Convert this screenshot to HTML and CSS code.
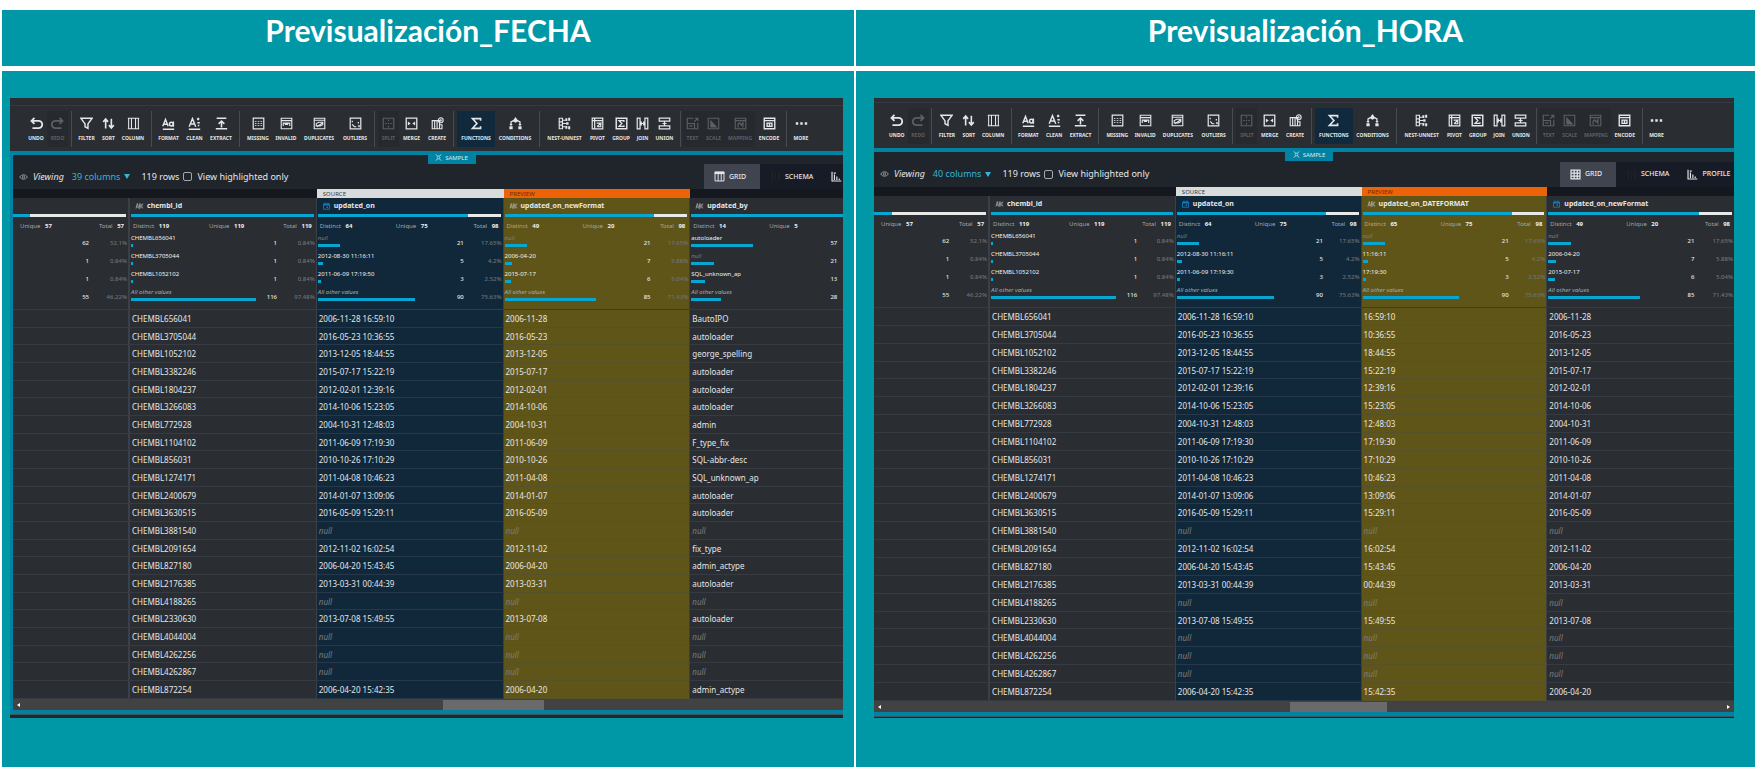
FILE: index.html
```
<!DOCTYPE html>
<html lang="es">
<head>
<meta charset="utf-8">
<title>Previsualización</title>
<link rel="stylesheet" href="styles.css">
</head>
<body>
<svg class="sprite" aria-hidden="true">
  <symbol id="undo" viewBox="0 0 16 16"><path d="M5.500 1 1.800 4.800l3.700 3.700M2 4.800h8.500a4.400 4.400 0 0 1 0 9H3" fill="none" stroke="currentColor" stroke-width="2.200"/></symbol>
  <symbol id="redo" viewBox="0 0 16 16"><path d="M10.500 1 14.200 4.800l-3.700 3.700M14 4.800H5.500a4.400 4.400 0 0 0 0 9H13" fill="none" stroke="currentColor" stroke-width="2.200"/></symbol>
  <symbol id="filter" viewBox="0 0 16 16"><path d="M1 1.500h14L9.800 8.500V14L6.200 12V8.500z" fill="none" stroke="currentColor" stroke-width="1.800"/></symbol>
  <symbol id="sort" viewBox="0 0 16 16"><path d="M4.500 14V3M1.500 6 4.500 2.500 7.500 6M11.500 2v11M8.500 10l3 3.500 3-3.500" fill="none" stroke="currentColor" stroke-width="2"/></symbol>
  <symbol id="column" viewBox="0 0 16 16"><path d="M2 1.500v13M5.500 1.500v13M10.500 1.500v13M14 1.500v13M1 1.500h14M1 14.500h14" fill="none" stroke="currentColor" stroke-width="1.300"/></symbol>
  <symbol id="format" viewBox="0 0 16 16"><path d="M1 15h14M1 11.500 4.300 3l3.300 8.500M2.200 9h4.400" fill="none" stroke="currentColor" stroke-width="1.800"/><circle cx="11.500" cy="8.700" r="2.300" fill="none" stroke="currentColor" stroke-width="1.800"/><path d="M14 5.500v6.500" stroke="currentColor" stroke-width="1.800"/></symbol>
  <symbol id="clean" viewBox="0 0 16 16"><path d="M1 15h14M1.500 12 5.500 2l4 10M3 8.500h5M11 2.500h3M12.500 1v3M11.500 7h3M13 9.500v2" fill="none" stroke="currentColor" stroke-width="1.800"/></symbol>
  <symbol id="extract" viewBox="0 0 16 16"><path d="M2 1.500h12M1 14.500h14M8 13V5M4.500 8.500 8 5l3.500 3.500" fill="none" stroke="currentColor" stroke-width="1.900"/></symbol>
  <symbol id="missing" viewBox="0 0 16 16"><path d="M1.500 1.500h13v13h-13z" fill="none" stroke="currentColor" stroke-width="1.500"/><path d="M3.500 5.500h9M3.500 8h9M3.500 10.500h9" stroke="currentColor" stroke-width="1" stroke-dasharray="2 1.500"/></symbol>
  <symbol id="invalid" viewBox="0 0 16 16"><path d="M1.500 1.500h13v13h-13zM1.500 4.500h13M4 11V7.500h8V11M6 9h4" fill="none" stroke="currentColor" stroke-width="1.400"/></symbol>
  <symbol id="duplicates" viewBox="0 0 16 16"><path d="M1.500 1.500h13v13h-13zM1.500 4h13M4 11V8l3-1.500h5v3L9 11zM5 12l7-5" fill="none" stroke="currentColor" stroke-width="1.400"/></symbol>
  <symbol id="outliers" viewBox="0 0 16 16"><path d="M1.500 1.500h13v13h-13z" fill="none" stroke="currentColor" stroke-width="1.500"/><path d="M4 4.500v2M4 9l2.500 3H9M11.500 6v2M11 11h1.500v1.500" fill="none" stroke="currentColor" stroke-width="1.500"/></symbol>
  <symbol id="split" viewBox="0 0 16 16"><path d="M1.500 1.500h13v13h-13zM8 3v2M8 7v2M8 11v2M4 8h2M10 8h2" fill="none" stroke="currentColor" stroke-width="1.400"/></symbol>
  <symbol id="merge" viewBox="0 0 16 16"><path d="M1.500 1.500h13v13h-13z" fill="none" stroke="currentColor" stroke-width="1.600"/><path d="M3.500 5.500 7 8l-3.500 2.500zM12.500 5.500 9 8l3.500 2.500z" fill="currentColor"/></symbol>
  <symbol id="create" viewBox="0 0 16 16"><path d="M1.500 4.500h9v10h-9zM4.500 4.500v10M7.500 4.500v10M10.500 9.500h3v5h-3" fill="none" stroke="currentColor" stroke-width="1.400"/><circle cx="12" cy="4" r="3" fill="none" stroke="currentColor" stroke-width="1.300"/><path d="M12 2v4M10 4h4" stroke="currentColor"/></symbol>
  <symbol id="functions" viewBox="0 0 16 16"><path d="M13 4.500V2H3l5.500 6L3 14h10v-2.500" fill="none" stroke="currentColor" stroke-width="2"/></symbol>
  <symbol id="conditions" viewBox="0 0 16 16"><path d="M4.500 5 8 0l3.500 5L8 7z" fill="currentColor"/><path d="M5.500 4.500 2.500 6v4M10.500 4.500l3 1.500v4" fill="none" stroke="currentColor" stroke-width="1.600"/><path d="M.500 8.500h4L2.500 11zM11.500 8.500h4l-2 2.500zM.500 11.500h4V15h-4zM11.500 11.500h4V15h-4z" fill="currentColor"/></symbol>
  <symbol id="nest" viewBox="0 0 16 16"><path d="M1.500 1.500h4v13h-4zM1.500 6h4M1.500 10h4M6 4h3M6 8h4M6 12h3" fill="none" stroke="currentColor" stroke-width="1.400"/><path d="M9 1.500h2.500V5H9zM12.500 1h2.500v3.500h-2.500zM10 6.500h3v3h-3zM9 11h2.500v3.500H9zM12.500 11.500H15V15h-2.500z" fill="currentColor"/></symbol>
  <symbol id="pivot" viewBox="0 0 16 16"><path d="M1.500 1.500h13v13h-13zM1.500 4.500h13M4.500 1.500v13M7 7.500h5L7.500 12M12 8v4H8" fill="none" stroke="currentColor" stroke-width="1.500"/></symbol>
  <symbol id="group" viewBox="0 0 16 16"><path d="M1.500 1.500h13v13h-13z" fill="none" stroke="currentColor" stroke-width="1.800"/><path d="M11 6V4.500H5L8.500 8 5 11.500h6V10" fill="none" stroke="currentColor" stroke-width="1.600"/></symbol>
  <symbol id="join" viewBox="0 0 16 16"><path d="M1.500 1.500H5v13H1.500zM11 1.500h3.500v13H11zM5 8h6M9.500 5.500v5M6.500 5.500v5" fill="none" stroke="currentColor" stroke-width="1.500"/></symbol>
  <symbol id="union" viewBox="0 0 16 16"><path d="M1.500 1.500h13V5h-13zM1.500 11h13v3.500h-13zM8 5v6M5.500 8h5" fill="none" stroke="currentColor" stroke-width="1.500"/></symbol>
  <symbol id="text" viewBox="0 0 16 16"><path d="M9 1.500H1.500v13h13V7M1.500 8h9v6.500M4 11h4M10 6l4.500-4.500M11 1.500h3.500V5" fill="none" stroke="currentColor" stroke-width="1.400"/></symbol>
  <symbol id="scale" viewBox="0 0 16 16"><path d="M1.500 1.500h13v13h-13z" fill="none" stroke="currentColor" stroke-width="1.300"/><path d="M4 3.500V13h9z" fill="currentColor"/></symbol>
  <symbol id="mapping" viewBox="0 0 16 16"><path d="M1.500 1.500h13v13h-13zM1.500 4.500h13M5 13V9l2-2 2 3 2-3v6" fill="none" stroke="currentColor" stroke-width="1.400"/></symbol>
  <symbol id="encode" viewBox="0 0 16 16"><path d="M1.500 1.500h13v13h-13zM1.500 4.500h13M5 7.500h6v4H5zM8 7.500v4" fill="none" stroke="currentColor" stroke-width="1.700"/></symbol>
  <symbol id="more" viewBox="0 0 16 16"><path d="M1 6.500h3v3H1zM6.500 6.500h3v3h-3zM12 6.500h3v3h-3z" fill="currentColor"/></symbol>
  <symbol id="eye" viewBox="0 0 16 16"><path d="M1 8q7-8 14 0-7 8-14 0z" fill="none" stroke="currentColor" stroke-width="1.500"/><circle cx="8" cy="8" r="2" fill="none" stroke="currentColor" stroke-width="1.300"/></symbol>
  <symbol id="sample" viewBox="0 0 16 16"><path d="M2 1l4 4M14 1l-4 4M2 15l4-4M14 15l-4-4" fill="none" stroke="currentColor" stroke-width="2"/><circle cx="8" cy="8" r="3" fill="none" stroke="currentColor" stroke-width="1.600"/></symbol>
  <symbol id="grid-a" viewBox="0 0 16 16"><path d="M1.500 1.500h13v13h-13zM6 4v10.500M10.500 4v10.500" fill="none" stroke="currentColor" stroke-width="1.400"/><path d="M1 1h14v3.500H1z" fill="currentColor"/></symbol>
  <symbol id="grid-b" viewBox="0 0 16 16"><path d="M1.500 1.500h13v13h-13zM6 1.500v13M10.500 1.500v13M1.500 6h13M1.500 10.500h13" fill="none" stroke="currentColor" stroke-width="1.800"/></symbol>
  <symbol id="schema" viewBox="0 0 16 16"><path d="M2 1h12v14H2z" fill="#1f2124"/><path d="M6 1v14M10 1v14" stroke="#10131a"/></symbol>
  <symbol id="profile" viewBox="0 0 16 16"><path d="M1.500 1v13.500H15M5 13V5M8.500 13V8M12 13v-2M4 3h3" fill="none" stroke="currentColor" stroke-width="1.700"/></symbol>
  <symbol id="abc" viewBox="0 0 16 16"><path d="M1 13 3.500 3 6 13M2 10h3M7.500 3.500v9h1.500a2 2 0 0 0 0-4.500H7.500h1.500a2 2 0 0 0 0-4.500zM15.500 4.500q-3-2-3 3.500t3 4" fill="none" stroke="currentColor" stroke-width="1.300"/></symbol>
  <symbol id="date" viewBox="0 0 16 16"><path d="M2 4h12v10.500H2z" fill="none" stroke="currentColor" stroke-width="1.800"/><path d="M2 4h12v3H2zM4 1h2v3H4zM10 1h2v3h-2zM8 9h3v3H8z" fill="currentColor"/></symbol>
</svg>

<main class="page">
  <h2 class="title">Previsualización_FECHA</h2>
  <h2 class="title">Previsualización_HORA</h2>

  <section class="cell cell-left">
    <div class="panel panel-left">
      <div class="topline"></div>
      <div class="toolbar">
        <span></span>
        <button class="tool"><svg><use href="#undo"/></svg>UNDO</button>
        <button class="tool" disabled><svg><use href="#redo"/></svg>REDO</button>
        <span class="sep"></span>
        <button class="tool"><svg><use href="#filter"/></svg>FILTER</button>
        <button class="tool"><svg><use href="#sort"/></svg>SORT</button>
        <button class="tool"><svg><use href="#column"/></svg>COLUMN</button>
        <span class="sep"></span>
        <button class="tool"><svg><use href="#format"/></svg>FORMAT</button>
        <button class="tool"><svg><use href="#clean"/></svg>CLEAN</button>
        <button class="tool"><svg><use href="#extract"/></svg>EXTRACT</button>
        <span class="sep"></span>
        <button class="tool"><svg><use href="#missing"/></svg>MISSING</button>
        <button class="tool"><svg><use href="#invalid"/></svg>INVALID</button>
        <button class="tool"><svg><use href="#duplicates"/></svg>DUPLICATES</button>
        <button class="tool"><svg><use href="#outliers"/></svg>OUTLIERS</button>
        <span class="sep"></span>
        <button class="tool" disabled><svg><use href="#split"/></svg>SPLIT</button>
        <button class="tool"><svg><use href="#merge"/></svg>MERGE</button>
        <button class="tool"><svg><use href="#create"/></svg>CREATE</button>
        <span class="sep"></span>
        <button class="tool active"><svg><use href="#functions"/></svg>FUNCTIONS</button>
        <button class="tool"><svg><use href="#conditions"/></svg>CONDITIONS</button>
        <span class="sep"></span>
        <button class="tool"><svg><use href="#nest"/></svg>NEST-UNNEST</button>
        <button class="tool"><svg><use href="#pivot"/></svg>PIVOT</button>
        <button class="tool"><svg><use href="#group"/></svg>GROUP</button>
        <button class="tool"><svg><use href="#join"/></svg>JOIN</button>
        <button class="tool"><svg><use href="#union"/></svg>UNION</button>
        <span class="sep"></span>
        <button class="tool" disabled><svg><use href="#text"/></svg>TEXT</button>
        <button class="tool" disabled><svg><use href="#scale"/></svg>SCALE</button>
        <button class="tool" disabled><svg><use href="#mapping"/></svg>MAPPING</button>
        <button class="tool"><svg><use href="#encode"/></svg>ENCODE</button>
        <span class="sep"></span>
        <button class="tool"><svg><use href="#more"/></svg>MORE</button>
      </div>
      <div class="strip strip-top"><span class="sample"><svg><use href="#sample"/></svg>SAMPLE</span></div>
      <div class="body">
        <div class="viewbar">
          <svg class="eye"><use href="#eye"/></svg><em class="viewing">Viewing</em>
          <button class="columns">39 columns <span class="caret"></span></button>
          <span class="rows">119 rows</span>
          <label class="check"><input type="checkbox">View highlighted only</label>
          <div class="tabs">
            <button class="tab on"><svg><use href="#grid-a"/></svg>GRID</button>
            <button class="tab"><svg><use href="#schema"/></svg>SCHEMA</button>
            <button class="tab" aria-label="Profile"><svg><use href="#profile"/></svg></button>
          </div>
        </div>
        <div class="wrap">
          <table class="data">
            <colgroup><col class="c-first"><col class="c-mid"><col class="c-mid"><col class="c-mid"><col></colgroup>
            <thead>
              <tr class="band"><td></td><td></td><td>SOURCE</td><td>PREVIEW</td><td></td></tr>
              <tr class="names">
                <th><div class="name"></div><div class="fill"><b style="width:15%"></b></div></th>
                <th><div class="name"><svg><use href="#abc"/></svg>chembl_id</div><div class="fill"><b style="width:100%"></b></div></th>
                <th><div class="name"><svg class="date"><use href="#date"/></svg>updated_on</div><div class="fill"><b style="width:82%"></b></div></th>
                <th><div class="name"><svg><use href="#abc"/></svg>updated_on_newFormat</div><div class="fill"><b style="width:82%"></b></div></th>
                <th><div class="name"><svg><use href="#abc"/></svg>updated_by</div><div class="fill fill-cut"><b style="width:100%"></b></div></th>
              </tr>
              <tr class="profile">
                <td><div class="tail">
                  <div class="stats"><span>Unique <b>57</b></span><span>Total <b>57</b></span></div>
                  <div class="val"><b>62</b><span>52.1%</span></div>
                  <div class="val"><b>1</b><span>0.84%</span></div>
                  <div class="val"><b>1</b><span>0.84%</span></div>
                  <div class="val"><b>55</b><span>46.22%</span></div>
                </div></td>
                <td><div class="prof">
                  <div class="stats"><span>Distinct <b>119</b></span><span>Unique <b>119</b></span><span>Total <b>119</b></span></div>
                  <div class="val"><div>CHEMBL656041<i style="width:1%"></i></div><b>1</b><span>0.84%</span></div>
                  <div class="val"><div>CHEMBL3705044<i style="width:1%"></i></div><b>1</b><span>0.84%</span></div>
                  <div class="val"><div>CHEMBL1052102<i style="width:1%"></i></div><b>1</b><span>0.84%</span></div>
                  <div class="val"><div><em>All other values</em><i style="width:97.48%"></i></div><b>116</b><span>97.48%</span></div>
                </div></td>
                <td><div class="prof">
                  <div class="stats"><span>Distinct <b>64</b></span><span>Unique <b>75</b></span><span>Total <b>98</b></span></div>
                  <div class="val"><div><em class="null">null</em><i style="width:17.65%"></i></div><b>21</b><span>17.65%</span></div>
                  <div class="val"><div>2012-08-30 11:16:11<i style="width:4.2%"></i></div><b>5</b><span>4.2%</span></div>
                  <div class="val"><div>2011-06-09 17:19:50<i style="width:2.52%"></i></div><b>3</b><span>2.52%</span></div>
                  <div class="val"><div><em>All other values</em><i style="width:75.63%"></i></div><b>90</b><span>75.63%</span></div>
                </div></td>
                <td><div class="prof">
                  <div class="stats"><span>Distinct <b>49</b></span><span>Unique <b>20</b></span><span>Total <b>98</b></span></div>
                  <div class="val"><div><em class="null">null</em><i style="width:17.65%"></i></div><b>21</b><span>17.65%</span></div>
                  <div class="val"><div>2006-04-20<i style="width:5.88%"></i></div><b>7</b><span>5.88%</span></div>
                  <div class="val"><div>2015-07-17<i style="width:5.04%"></i></div><b>6</b><span>5.04%</span></div>
                  <div class="val"><div><em>All other values</em><i style="width:71.43%"></i></div><b>85</b><span>71.43%</span></div>
                </div></td>
                <td><div class="prof">
                  <div class="stats"><span>Distinct <b>14</b></span><span>Unique <b>5</b></span></div>
                  <div class="val"><div>autoloader<i style="width:47.9%"></i></div><b>57</b></div>
                  <div class="val"><div><em class="null">null</em><i style="width:17.65%"></i></div><b>21</b></div>
                  <div class="val"><div>SQL_unknown_ap<i style="width:10.92%"></i></div><b>13</b></div>
                  <div class="val"><div><em>All other values</em><i style="width:23.53%"></i></div><b>28</b></div>
                </div></td>
              </tr>
            </thead>
            <tbody>
              <tr><td></td><td>CHEMBL656041</td><td>2006-11-28 16:59:10</td><td>2006-11-28</td><td>BautoIPO</td></tr>
              <tr><td></td><td>CHEMBL3705044</td><td>2016-05-23 10:36:55</td><td>2016-05-23</td><td>autoloader</td></tr>
              <tr><td></td><td>CHEMBL1052102</td><td>2013-12-05 18:44:55</td><td>2013-12-05</td><td>george_spelling</td></tr>
              <tr><td></td><td>CHEMBL3382246</td><td>2015-07-17 15:22:19</td><td>2015-07-17</td><td>autoloader</td></tr>
              <tr><td></td><td>CHEMBL1804237</td><td>2012-02-01 12:39:16</td><td>2012-02-01</td><td>autoloader</td></tr>
              <tr><td></td><td>CHEMBL3266083</td><td>2014-10-06 15:23:05</td><td>2014-10-06</td><td>autoloader</td></tr>
              <tr><td></td><td>CHEMBL772928</td><td>2004-10-31 12:48:03</td><td>2004-10-31</td><td>admin</td></tr>
              <tr><td></td><td>CHEMBL1104102</td><td>2011-06-09 17:19:30</td><td>2011-06-09</td><td>F_type_fix</td></tr>
              <tr><td></td><td>CHEMBL856031</td><td>2010-10-26 17:10:29</td><td>2010-10-26</td><td>SQL-abbr-desc</td></tr>
              <tr><td></td><td>CHEMBL1274171</td><td>2011-04-08 10:46:23</td><td>2011-04-08</td><td>SQL_unknown_ap</td></tr>
              <tr><td></td><td>CHEMBL2400679</td><td>2014-01-07 13:09:06</td><td>2014-01-07</td><td>autoloader</td></tr>
              <tr><td></td><td>CHEMBL3630515</td><td>2016-05-09 15:29:11</td><td>2016-05-09</td><td>autoloader</td></tr>
              <tr><td></td><td>CHEMBL3881540</td><td><i>null</i></td><td><i>null</i></td><td><i>null</i></td></tr>
              <tr><td></td><td>CHEMBL2091654</td><td>2012-11-02 16:02:54</td><td>2012-11-02</td><td>fix_type</td></tr>
              <tr><td></td><td>CHEMBL827180</td><td>2006-04-20 15:43:45</td><td>2006-04-20</td><td>admin_actype</td></tr>
              <tr><td></td><td>CHEMBL2176385</td><td>2013-03-31 00:44:39</td><td>2013-03-31</td><td>autoloader</td></tr>
              <tr><td></td><td>CHEMBL4188265</td><td><i>null</i></td><td><i>null</i></td><td><i>null</i></td></tr>
              <tr><td></td><td>CHEMBL2330630</td><td>2013-07-08 15:49:55</td><td>2013-07-08</td><td>autoloader</td></tr>
              <tr><td></td><td>CHEMBL4044004</td><td><i>null</i></td><td><i>null</i></td><td><i>null</i></td></tr>
              <tr><td></td><td>CHEMBL4262256</td><td><i>null</i></td><td><i>null</i></td><td><i>null</i></td></tr>
              <tr><td></td><td>CHEMBL4262867</td><td><i>null</i></td><td><i>null</i></td><td><i>null</i></td></tr>
              <tr><td></td><td>CHEMBL872254</td><td>2006-04-20 15:42:35</td><td>2006-04-20</td><td>admin_actype</td></tr>
            </tbody>
          </table>
        </div>
        <div class="scroll"><span class="arrow-left"></span><span class="thumb"></span></div>
      </div>
      <div class="strip"></div>
      <div class="foot"></div>
    </div>
  </section>

  <section class="cell cell-right">
    <div class="panel panel-right">
      <div class="topline"></div>
      <div class="toolbar">
        <span></span>
        <button class="tool"><svg><use href="#undo"/></svg>UNDO</button>
        <button class="tool" disabled><svg><use href="#redo"/></svg>REDO</button>
        <span class="sep"></span>
        <button class="tool"><svg><use href="#filter"/></svg>FILTER</button>
        <button class="tool"><svg><use href="#sort"/></svg>SORT</button>
        <button class="tool"><svg><use href="#column"/></svg>COLUMN</button>
        <span class="sep"></span>
        <button class="tool"><svg><use href="#format"/></svg>FORMAT</button>
        <button class="tool"><svg><use href="#clean"/></svg>CLEAN</button>
        <button class="tool"><svg><use href="#extract"/></svg>EXTRACT</button>
        <span class="sep"></span>
        <button class="tool"><svg><use href="#missing"/></svg>MISSING</button>
        <button class="tool"><svg><use href="#invalid"/></svg>INVALID</button>
        <button class="tool"><svg><use href="#duplicates"/></svg>DUPLICATES</button>
        <button class="tool"><svg><use href="#outliers"/></svg>OUTLIERS</button>
        <span class="sep"></span>
        <button class="tool" disabled><svg><use href="#split"/></svg>SPLIT</button>
        <button class="tool"><svg><use href="#merge"/></svg>MERGE</button>
        <button class="tool"><svg><use href="#create"/></svg>CREATE</button>
        <span class="sep"></span>
        <button class="tool active"><svg><use href="#functions"/></svg>FUNCTIONS</button>
        <button class="tool"><svg><use href="#conditions"/></svg>CONDITIONS</button>
        <span class="sep"></span>
        <button class="tool"><svg><use href="#nest"/></svg>NEST-UNNEST</button>
        <button class="tool"><svg><use href="#pivot"/></svg>PIVOT</button>
        <button class="tool"><svg><use href="#group"/></svg>GROUP</button>
        <button class="tool"><svg><use href="#join"/></svg>JOIN</button>
        <button class="tool"><svg><use href="#union"/></svg>UNION</button>
        <span class="sep"></span>
        <button class="tool" disabled><svg><use href="#text"/></svg>TEXT</button>
        <button class="tool" disabled><svg><use href="#scale"/></svg>SCALE</button>
        <button class="tool" disabled><svg><use href="#mapping"/></svg>MAPPING</button>
        <button class="tool"><svg><use href="#encode"/></svg>ENCODE</button>
        <span class="sep"></span>
        <button class="tool"><svg><use href="#more"/></svg>MORE</button>
      </div>
      <div class="strip strip-top"><span class="sample"><svg><use href="#sample"/></svg>SAMPLE</span></div>
      <div class="body">
        <div class="viewbar">
          <svg class="eye"><use href="#eye"/></svg><em class="viewing">Viewing</em>
          <button class="columns">40 columns <span class="caret"></span></button>
          <span class="rows">119 rows</span>
          <label class="check"><input type="checkbox">View highlighted only</label>
          <div class="tabs">
            <button class="tab on"><svg><use href="#grid-b"/></svg>GRID</button>
            <button class="tab"><svg><use href="#schema"/></svg>SCHEMA</button>
            <button class="tab"><svg><use href="#profile"/></svg>PROFILE</button>
          </div>
        </div>
        <div class="wrap">
          <table class="data">
            <colgroup><col class="c-first"><col class="c-mid"><col class="c-mid"><col class="c-mid"><col></colgroup>
            <thead>
              <tr class="band"><td></td><td></td><td>SOURCE</td><td>PREVIEW</td><td></td></tr>
              <tr class="names">
                <th><div class="name"></div><div class="fill"><b style="width:16%"></b></div></th>
                <th><div class="name"><svg><use href="#abc"/></svg>chembl_id</div><div class="fill"><b style="width:100%"></b></div></th>
                <th><div class="name"><svg class="date"><use href="#date"/></svg>updated_on</div><div class="fill"><b style="width:82%"></b></div></th>
                <th><div class="name"><svg><use href="#abc"/></svg>updated_on_DATEFORMAT</div><div class="fill"><b style="width:82%"></b></div></th>
                <th><div class="name"><svg class="date"><use href="#date"/></svg>updated_on_newFormat</div><div class="fill"><b style="width:82%"></b></div></th>
              </tr>
              <tr class="profile">
                <td><div class="tail">
                  <div class="stats"><span>Unique <b>57</b></span><span>Total <b>57</b></span></div>
                  <div class="val"><b>62</b><span>52.1%</span></div>
                  <div class="val"><b>1</b><span>0.84%</span></div>
                  <div class="val"><b>1</b><span>0.84%</span></div>
                  <div class="val"><b>55</b><span>46.22%</span></div>
                </div></td>
                <td><div class="prof">
                  <div class="stats"><span>Distinct <b>119</b></span><span>Unique <b>119</b></span><span>Total <b>119</b></span></div>
                  <div class="val"><div>CHEMBL656041<i style="width:1%"></i></div><b>1</b><span>0.84%</span></div>
                  <div class="val"><div>CHEMBL3705044<i style="width:1%"></i></div><b>1</b><span>0.84%</span></div>
                  <div class="val"><div>CHEMBL1052102<i style="width:1%"></i></div><b>1</b><span>0.84%</span></div>
                  <div class="val"><div><em>All other values</em><i style="width:97.48%"></i></div><b>116</b><span>97.48%</span></div>
                </div></td>
                <td><div class="prof">
                  <div class="stats"><span>Distinct <b>64</b></span><span>Unique <b>75</b></span><span>Total <b>98</b></span></div>
                  <div class="val"><div><em class="null">null</em><i style="width:17.65%"></i></div><b>21</b><span>17.65%</span></div>
                  <div class="val"><div>2012-08-30 11:16:11<i style="width:4.2%"></i></div><b>5</b><span>4.2%</span></div>
                  <div class="val"><div>2011-06-09 17:19:30<i style="width:2.52%"></i></div><b>3</b><span>2.52%</span></div>
                  <div class="val"><div><em>All other values</em><i style="width:75.63%"></i></div><b>90</b><span>75.63%</span></div>
                </div></td>
                <td><div class="prof">
                  <div class="stats"><span>Distinct <b>65</b></span><span>Unique <b>75</b></span><span>Total <b>98</b></span></div>
                  <div class="val"><div><em class="null">null</em><i style="width:17.65%"></i></div><b>21</b><span>17.65%</span></div>
                  <div class="val"><div>11:16:11<i style="width:4.2%"></i></div><b>5</b><span>4.2%</span></div>
                  <div class="val"><div>17:19:30<i style="width:2.52%"></i></div><b>3</b><span>2.52%</span></div>
                  <div class="val"><div><em>All other values</em><i style="width:75.63%"></i></div><b>90</b><span>75.63%</span></div>
                </div></td>
                <td><div class="prof">
                  <div class="stats"><span>Distinct <b>49</b></span><span>Unique <b>20</b></span><span>Total <b>98</b></span></div>
                  <div class="val"><div><em class="null">null</em><i style="width:17.65%"></i></div><b>21</b><span>17.65%</span></div>
                  <div class="val"><div>2006-04-20<i style="width:5.88%"></i></div><b>7</b><span>5.88%</span></div>
                  <div class="val"><div>2015-07-17<i style="width:5.04%"></i></div><b>6</b><span>5.04%</span></div>
                  <div class="val"><div><em>All other values</em><i style="width:71.43%"></i></div><b>85</b><span>71.43%</span></div>
                </div></td>
              </tr>
            </thead>
            <tbody>
              <tr><td></td><td>CHEMBL656041</td><td>2006-11-28 16:59:10</td><td>16:59:10</td><td>2006-11-28</td></tr>
              <tr><td></td><td>CHEMBL3705044</td><td>2016-05-23 10:36:55</td><td>10:36:55</td><td>2016-05-23</td></tr>
              <tr><td></td><td>CHEMBL1052102</td><td>2013-12-05 18:44:55</td><td>18:44:55</td><td>2013-12-05</td></tr>
              <tr><td></td><td>CHEMBL3382246</td><td>2015-07-17 15:22:19</td><td>15:22:19</td><td>2015-07-17</td></tr>
              <tr><td></td><td>CHEMBL1804237</td><td>2012-02-01 12:39:16</td><td>12:39:16</td><td>2012-02-01</td></tr>
              <tr><td></td><td>CHEMBL3266083</td><td>2014-10-06 15:23:05</td><td>15:23:05</td><td>2014-10-06</td></tr>
              <tr><td></td><td>CHEMBL772928</td><td>2004-10-31 12:48:03</td><td>12:48:03</td><td>2004-10-31</td></tr>
              <tr><td></td><td>CHEMBL1104102</td><td>2011-06-09 17:19:30</td><td>17:19:30</td><td>2011-06-09</td></tr>
              <tr><td></td><td>CHEMBL856031</td><td>2010-10-26 17:10:29</td><td>17:10:29</td><td>2010-10-26</td></tr>
              <tr><td></td><td>CHEMBL1274171</td><td>2011-04-08 10:46:23</td><td>10:46:23</td><td>2011-04-08</td></tr>
              <tr><td></td><td>CHEMBL2400679</td><td>2014-01-07 13:09:06</td><td>13:09:06</td><td>2014-01-07</td></tr>
              <tr><td></td><td>CHEMBL3630515</td><td>2016-05-09 15:29:11</td><td>15:29:11</td><td>2016-05-09</td></tr>
              <tr><td></td><td>CHEMBL3881540</td><td><i>null</i></td><td><i>null</i></td><td><i>null</i></td></tr>
              <tr><td></td><td>CHEMBL2091654</td><td>2012-11-02 16:02:54</td><td>16:02:54</td><td>2012-11-02</td></tr>
              <tr><td></td><td>CHEMBL827180</td><td>2006-04-20 15:43:45</td><td>15:43:45</td><td>2006-04-20</td></tr>
              <tr><td></td><td>CHEMBL2176385</td><td>2013-03-31 00:44:39</td><td>00:44:39</td><td>2013-03-31</td></tr>
              <tr><td></td><td>CHEMBL4188265</td><td><i>null</i></td><td><i>null</i></td><td><i>null</i></td></tr>
              <tr><td></td><td>CHEMBL2330630</td><td>2013-07-08 15:49:55</td><td>15:49:55</td><td>2013-07-08</td></tr>
              <tr><td></td><td>CHEMBL4044004</td><td><i>null</i></td><td><i>null</i></td><td><i>null</i></td></tr>
              <tr><td></td><td>CHEMBL4262256</td><td><i>null</i></td><td><i>null</i></td><td><i>null</i></td></tr>
              <tr><td></td><td>CHEMBL4262867</td><td><i>null</i></td><td><i>null</i></td><td><i>null</i></td></tr>
              <tr><td></td><td>CHEMBL872254</td><td>2006-04-20 15:42:35</td><td>15:42:35</td><td>2006-04-20</td></tr>
            </tbody>
          </table>
        </div>
        <div class="scroll"><span class="arrow-left"></span><span class="thumb"></span><span class="arrow-right"></span></div>
      </div>
      <div class="strip"></div>
      <div class="foot"></div>
    </div>
  </section>
</main>
</body>
</html>
```
FILE: styles.css
```
* { box-sizing: border-box; }
body { margin: 0; background: #fff; font-family: "Noto Sans", "Open Sans", sans-serif; }
button { margin: 0; padding: 0; border: 0; background: none; font: inherit; color: inherit; }
.sprite { display: none; }

.page {
  display: grid;
  grid-template-columns: 852fr 899fr;
  grid-template-rows: 56px 1fr;
  gap: 5px 2px;
  height: 100vh;
  min-height: 640px;
  padding: 10px 6px 4px 2px;
}
.title {
  margin: 0;
  padding-top: 3px;
  background: #0097a7;
  color: #fff;
  font: bold 30px/34px Lato, "Open Sans", sans-serif;
  text-align: center;
}
.cell { display: flex; min-width: 0; min-height: 0; background: #0097a7; }
.cell-left { padding: 27px 11px 49px 8px; }
.cell-right { padding: 27px 21px 49px 18px; }

.panel {
  flex: 1;
  min-width: 0;
  display: flex;
  flex-direction: column;
  background: #2a2d32;
  color: #e4e6e8;
}
.panel-left { --line: 8px; --lead: 15fr; --tail: 31fr; --tabs: 139px; --shift: 50px; }
.panel-right { --line: 5px; --lead: 12fr; --tail: 67fr; --tabs: 174px; --shift: 10px; }

.topline { height: var(--line); border-bottom: 1px solid #363a40; }
.toolbar {
  display: grid;
  grid-template-columns:
    var(--lead) 22fr 21fr 6fr 25fr 19fr 30fr 6fr 29fr 23fr 30fr 7fr
    30fr 26fr 40fr 32fr 7fr 21fr 25fr 26fr 7fr 38fr 40fr 8fr
    43fr 23fr 24fr 19fr 25fr 6fr 19fr 23fr 30fr 28fr 7fr 22fr var(--tail);
  padding: 5px 0 4px;
}
.toolbar > * { min-width: 0; }
.tool {
  display: flex;
  flex-direction: column;
  align-items: center;
  gap: 4px;
  height: 36px;
  padding-top: 6px;
  font-size: 5px;
  font-weight: bold;
  line-height: 8px;
  white-space: nowrap;
}
.tool svg { flex: none; width: 13px; height: 13px; }
.tool:disabled { background: #26292e; color: #5c6066; }
.active { background: #11293d; }
.sep { justify-self: center; width: 1px; background: #474b52; }

.strip {
  display: flex;
  justify-content: center;
  flex: none;
  height: 4px;
  background: #0082a2;
}
.strip-top { padding-left: var(--shift); }
.sample {
  position: relative;
  display: flex;
  align-items: center;
  justify-content: center;
  gap: 3px;
  width: 48px;
  height: 13px;
  background: #0082a2;
  font-size: 6px;
  z-index: 1;
}
.sample svg { width: 7px; height: 7px; }

.body { flex: 1; min-height: 0; display: flex; flex-direction: column; }
.panel-left .body { border-left: 3px solid #0082a2; }
.foot { height: 4px; border-top: 1px solid #41535f; background: #22262d; }
.panel-right .foot { height: 2px; }

.viewbar {
  display: flex;
  align-items: center;
  flex: none;
  height: 34px;
  padding: 9px 0 0 6px;
  background: #20242b;
  font-size: 9px;
  line-height: 14px;
  white-space: nowrap;
}
.panel-right .viewbar { height: 35px; }
.eye { width: 9px; height: 10px; margin-right: 5px; color: #a5a9ae; }
.viewing { margin-right: 8px; }
.columns { display: flex; align-items: center; gap: 4px; margin-right: 11px; color: #35b4dc; }
.caret { border: 3px solid transparent; border-top: 5px solid #35b4dc; border-bottom: 0; }
.rows { margin-right: 4px; }
.check { display: flex; align-items: center; gap: 5px; }
.check input {
  appearance: none;
  width: 9px;
  height: 9px;
  margin: 0;
  border: 1px solid #a5a9ae;
  border-radius: 2px;
}
.tabs {
  display: flex;
  width: var(--tabs);
  height: 25px;
  margin-left: auto;
  overflow: hidden;
  background: #171b25;
  font-size: 7px;
  font-weight: 500;
}
.tab { display: flex; align-items: center; gap: 4px; flex: none; padding-left: 10px; }
.tab svg { width: 11px; height: 13px; }
.tab + .tab + .tab { padding-left: 18px; }
.on { width: 56px; background: #40444f; }

.wrap { flex: 1; min-height: 0; }
.data {
  width: 100%;
  height: 100%;
  table-layout: fixed;
  border-collapse: separate;
  border-spacing: 0;
  font-size: 8px;
  line-height: 10px;
  white-space: nowrap;
}
.c-first { width: 14.1%; }
.c-mid { width: 22.5%; }
.panel-right .c-first { width: 13.5%; }
.panel-right .c-mid { width: 21.6%; }
.data td, .data th { overflow: hidden; padding: 0; border-right: 1px solid #3a3f48; text-align: left; }
.data td:first-child, .data th:first-child { border-right-width: 2px; }
.data td:last-child, .data th:last-child { border-right: 0; }
.data td:nth-child(3), .data th:nth-child(3) { background: #11283b; }
.data td:nth-child(4), .data th:nth-child(4) { background: #605519; }
.data tbody td { padding: 1px 0 0 2px; border-bottom: 1px solid #363b43; }
.data tbody td:nth-child(3) { border-bottom-color: #263849; }
.data tbody td:nth-child(4) { border-bottom-color: #55522b; }
.data tbody i { color: #7b7d7d; }

.band { height: 9px; font-size: 6px; line-height: 8px; }
.band td { background: #15181f; }
.data .band td { border-right: 0; padding-left: 6px; }
.data .band td:nth-child(3) { background: #d8dcdd; color: #3a3d42; }
.data .band td:nth-child(4) { background: #ee6208; color: #6b2c04; }
.names { height: 19px; }
.name { display: flex; align-items: center; gap: 3px; height: 16px; padding-left: 5px; font-size: 7px; }
.name svg { width: 9px; height: 8px; color: #b9bbbb; }
.name .date { color: #0a7dc0; }
.fill { height: 3px; margin: 0 2px 0 1px; background: #e8eaea; }
.names th:first-child .fill { margin-left: 0; }
.fill-cut { margin-right: 0; }
.fill b { display: block; height: 3px; background: #07a5d0; }

.profile { height: 93px; font-size: 6px; line-height: 8px; }
.data .profile td { border-bottom: 1px solid #363b43; vertical-align: top; }
.prof { min-width: 184px; padding: 0 1px; }
.tail { padding: 0 1px 0 7px; }
.stats {
  display: grid;
  grid-template-columns: 76px 1fr auto;
  align-items: center;
  height: 17px;
  padding: 1px 3px 0 2px;
  color: #a3a7aa;
}
.tail .stats { grid-template-columns: 1fr auto; padding-left: 0; }
.stats b { margin-left: 3px; color: #eef0f0; }
.val { display: grid; grid-template-columns: 128px 18px 1fr; height: 18px; }
.tail .val { grid-template-columns: 1fr 38px; }
.val div { color: #f0f1f1; }
.val div i { display: block; min-width: 2px; height: 3px; margin-top: 2px; background: #07a5d0; }
.val em { color: #a9adad; }
.val .null { color: #7b7d7d; }
.val > b, .val > span { padding-top: 5px; text-align: right; font-weight: 500; }
.val > span { color: #6e7376; }

.scroll { position: relative; flex: none; height: 11px; background: #424242; }
.thumb { position: absolute; top: 1px; bottom: 0; left: 51.8%; width: 12.2%; background: #6a6a6a; }
.panel-right .thumb { left: 48.4%; width: 11.3%; }
.arrow-left, .arrow-right { position: absolute; top: 4px; border: 2px solid transparent; }
.arrow-left { left: 2px; border-right: 3px solid #fff; }
.arrow-right { right: 2px; border-left: 3px solid #fff; }
```
